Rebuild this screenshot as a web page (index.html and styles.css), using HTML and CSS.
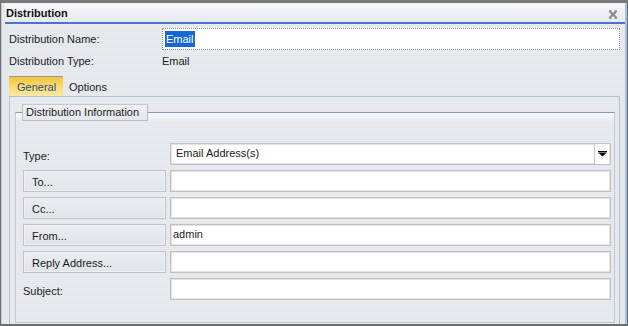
FILE: index.html
```html
<!DOCTYPE html>
<html>
<head>
<meta charset="utf-8">
<link rel="stylesheet" href="styles.css">
</head>
<body>
<div class="win">
  <div class="frame">
    <div class="titlebar">
      <span class="title">Distribution</span>
      <svg class="close" width="10" height="9" viewBox="0 0 10 9">
        <path d="M1.5 1 L8.5 8 M8.5 1 L1.5 8" stroke="#8a8a8a" stroke-width="2.2" fill="none"/>
        <path d="M1 0.5 H3.5 M6.5 0.5 H9 M1 8.5 H3.5 M6.5 8.5 H9" stroke="#9a9a9a" stroke-width="1" fill="none"/>
      </svg>
    </div>
    <div class="content">
      <div class="prop">
        <span class="prop-label">Distribution Name:</span>
        <div class="name-input"><span class="sel">Email</span></div>
      </div>
      <div class="prop type-row">
        <span class="prop-label">Distribution Type:</span>
        <span class="prop-value">Email</span>
      </div>
      <div class="tabs">
        <span class="tab active">General</span>
        <span class="tab">Options</span>
      </div>
      <div class="panel">
        <fieldset class="group">
          <legend class="legend">Distribution Information</legend>
          <div class="form">
            <span class="flabel">Type:</span>
            <div class="field select">
              <span class="select-text">Email Address(s)</span>
              <span class="drop">
                <svg width="9" height="6" viewBox="0 0 9 6"><rect x="0" y="0" width="9" height="1" fill="#000"/><path d="M0 1.5 H9 L4.5 5.5 Z" fill="#000"/></svg>
              </span>
            </div>
            <span class="btn">To...</span>
            <div class="field"></div>
            <span class="btn">Cc...</span>
            <div class="field"></div>
            <span class="btn">From...</span>
            <div class="field"><span class="ftext">admin</span></div>
            <span class="btn">Reply Address...</span>
            <div class="field"></div>
            <span class="flabel">Subject:</span>
            <div class="field"></div>
          </div>
        </fieldset>
      </div>
    </div>
  </div>
</div>
</body>
</html>
```

FILE: styles.css
```css
html, body {
  margin: 0;
  padding: 0;
}
body {
  font-family: "Liberation Sans", Arial, sans-serif;
  font-size: 11px;
  color: #1b1b1b;
  background: #e6e9ee;
}
.win {
  width: 628px;
  height: 326px;
  box-sizing: border-box;
  border-top: 3px solid #7a7a7a;
  border-left: 1px solid #6e6e6e;
  border-right: 1px solid #6e6e6e;
  border-bottom: 2px solid #6e6e6e;
  overflow: hidden;
}
.frame {
  height: 100%;
  box-sizing: border-box;
  border-left: 1px solid #c3ccd8;
  border-right: 2px solid #a9c0dd;
  background: repeating-linear-gradient(#e3e6eb 0 1px, #e8ebef 1px 2px);
  display: flex;
  flex-direction: column;
}
.titlebar {
  height: 19px;
  margin-left: 3px;
  border-bottom: 2px solid #4a74c6;
  background: linear-gradient(#f5f7fa, #e7eaef);
  display: flex;
  align-items: center;
  justify-content: space-between;
  padding: 0 7px 0 1px;
}
.title {
  font-weight: bold;
  font-size: 11px;
  color: #111;
}
.close {
  display: block;
  margin-top: 3px;
}
.content {
  flex: 1;
  padding: 4px 5px 0 7px;
  display: flex;
  flex-direction: column;
}
.prop {
  display: flex;
  align-items: center;
  height: 22px;
}
.prop-label {
  width: 153px;
  flex: none;
}
.name-input {
  flex: 1;
  height: 22px;
  box-sizing: border-box;
  border: 1px dotted #9a9a9a;
  background: #fff;
  display: flex;
  align-items: center;
  padding-left: 2px;
}
.sel {
  background: #1667d6;
  color: #fff;
  line-height: 16px;
  padding: 0 1px;
}
.type-row {
  margin-top: 1px;
  height: 20px;
}
.tabs {
  display: flex;
  align-items: stretch;
  margin-top: 5px;
  height: 20px;
}
.tab {
  display: flex;
  align-items: center;
  padding: 1px 6px 0 6px;
}
.tab.active {
  width: 54px;
  box-sizing: border-box;
  padding-left: 8px;
  border-top: 1px solid #9a9a9a;
  background: linear-gradient(#f3c53c, #f9dd76 60%, #fbe9a6);
  color: #2c4c80;
}
.panel {
  flex: 1;
  border-top: 1px solid #b6c1cf;
  border-left: 1px solid #b6c1cf;
  border-right: 1px solid #b6c1cf;
  padding: 7px 4px 0 5px;
  display: flex;
  flex-direction: column;
}
.group {
  flex: 1;
  margin: 0 0 1px 0;
  padding: 0 3px 0 7px;
  border: 1px solid #c3c8cf;
  border-top-color: #7f9cc6;
  background: linear-gradient(#f7f9fb, #e6e9ee 9px, transparent 10px);
  min-width: 0;
}
.legend {
  margin-left: -1px;
  padding: 0 8px 0 3px;
  height: 17px;
  box-sizing: border-box;
  line-height: 15px;
  border: 1px solid #bcbcbc;
  border-top-color: #c9c9c9;
  background: linear-gradient(#eef1f4, #e4e7ec);
  color: #1b1b1b;
}
.form {
  display: grid;
  grid-template-columns: 143px 1fr;
  column-gap: 4px;
  row-gap: 5px;
  grid-auto-rows: 22px;
  margin-top: 22px;
}
.flabel {
  display: flex;
  align-items: center;
  padding-top: 3px;
}
.btn {
  display: flex;
  align-items: center;
  padding: 2px 0 0 8px;
  box-sizing: border-box;
  border: 1px solid #bfc2c6;
  box-shadow: inset 0 0 0 1px #eef0f3;
  background: linear-gradient(#e9ecf0, #e1e4e9);
}
.field {
  box-sizing: border-box;
  border: 1px solid #c2c2c2;
  box-shadow: inset 0 0 0 1px #e3e3e3;
  background: #fff;
  display: flex;
  align-items: flex-start;
}
.ftext {
  padding: 3px 0 0 2px;
}
.select {
  justify-content: space-between;
}
.select-text {
  padding: 3px 0 0 5px;
}
.drop {
  width: 15px;
  height: 20px;
  box-sizing: border-box;
  border-left: 1px solid #c8c8c8;
  display: flex;
  align-items: center;
  justify-content: center;
  background: #fff;
  margin-right: 1px;
}
.drop svg {
  display: block;
}
```
